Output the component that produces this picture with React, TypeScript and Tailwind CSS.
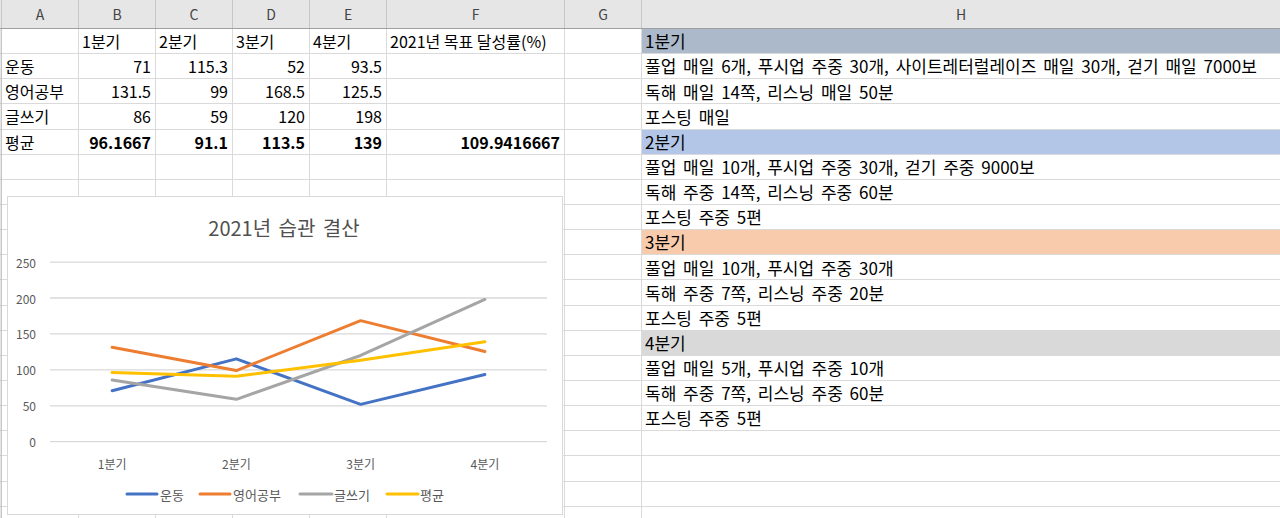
import React from "react";

const FONT = { fontFamily: '"Noto Sans CJK KR", "Noto Sans", sans-serif' };

type Cell = { t?: string; r?: boolean; b?: boolean };
type Row = { cells: Cell[]; h?: string; hbg?: string };

const rows: Row[] = [
  { cells: [{}, { t: "1분기" }, { t: "2분기" }, { t: "3분기" }, { t: "4분기" }, { t: "2021년 목표 달성률(%)" }, {}], h: "1분기", hbg: "bg-[#acb9ca]" },
  { cells: [{ t: "운동" }, { t: "71", r: true }, { t: "115.3", r: true }, { t: "52", r: true }, { t: "93.5", r: true }, {}, {}], h: "풀업 매일 6개, 푸시업 주중 30개, 사이트레터럴레이즈 매일 30개, 걷기 매일 7000보" },
  { cells: [{ t: "영어공부" }, { t: "131.5", r: true }, { t: "99", r: true }, { t: "168.5", r: true }, { t: "125.5", r: true }, {}, {}], h: "독해 매일 14쪽, 리스닝 매일 50분" },
  { cells: [{ t: "글쓰기" }, { t: "86", r: true }, { t: "59", r: true }, { t: "120", r: true }, { t: "198", r: true }, {}, {}], h: "포스팅 매일" },
  { cells: [{ t: "평균" }, { t: "96.1667", r: true, b: true }, { t: "91.1", r: true, b: true }, { t: "113.5", r: true, b: true }, { t: "139", r: true, b: true }, { t: "109.9416667", r: true, b: true }, {}], h: "2분기", hbg: "bg-[#b4c6e7]" },
  { cells: [], h: "풀업 매일 10개, 푸시업 주중 30개, 걷기 주중 9000보" },
  { cells: [], h: "독해 주중 14쪽, 리스닝 주중 60분" },
  { cells: [], h: "포스팅 주중 5편" },
  { cells: [], h: "3분기", hbg: "bg-[#f8cbad]" },
  { cells: [], h: "풀업 매일 10개, 푸시업 주중 30개" },
  { cells: [], h: "독해 주중 7쪽, 리스닝 주중 20분" },
  { cells: [], h: "포스팅 주중 5편" },
  { cells: [], h: "4분기", hbg: "bg-[#d9d9d9]" },
  { cells: [], h: "풀업 매일 5개, 푸시업 주중 10개" },
  { cells: [], h: "독해 주중 7쪽, 리스닝 주중 60분" },
  { cells: [], h: "포스팅 주중 5편" },
  { cells: [] },
  { cells: [] },
  { cells: [] },
  { cells: [] },
];

const widths = ["w-[77px]", "w-[77px]", "w-[77px]", "w-[77px]", "w-[77px]", "w-[178px]", "w-[77px]"];
const letters = ["A", "B", "C", "D", "E", "F", "G"];

const series = [
  { name: "운동", color: "#4472c4", v: [71, 115.3, 52, 93.5] },
  { name: "영어공부", color: "#ed7d31", v: [131.5, 99, 168.5, 125.5] },
  { name: "글쓰기", color: "#a5a5a5", v: [86, 59, 120, 198] },
  { name: "평균", color: "#ffc000", v: [96.1667, 91.1, 113.5, 139] },
];

const X0 = 42;
const X1 = 539;
const band = (X1 - X0) / 4;
const cx = (i: number) => X0 + band * (i + 0.5);
const cy = (v: number) => 244.7 - v * 0.7184;

function Chart() {
  const legend = [
    { x1: 119, x2: 149, tx: 152 },
    { x1: 192, x2: 222, tx: 225 },
    { x1: 292, x2: 324, tx: 326 },
    { x1: 379, x2: 410, tx: 412 },
  ];
  return (
    <div className="absolute left-[7px] top-[196px] w-[556px] h-[319px] border border-[#d9d9d9] bg-white" style={FONT}>
      <svg width="554" height="317" className="block">
        <text x="276" y="30" textAnchor="middle" dominantBaseline="central" fontSize="20" fill="#505050" style={{ wordSpacing: "3px" }}>
          2021년 습관 결산
        </text>
        {[0, 50, 100, 150, 200, 250].map((v) => (
          <g key={v}>
            <line x1={X0} x2={X1} y1={cy(v)} y2={cy(v)} stroke="#d9d9d9" strokeWidth="1.3" />
            <text x="28" y={cy(v)} textAnchor="end" dominantBaseline="central" fontSize="12" fill="#595959">
              {v}
            </text>
          </g>
        ))}
        {["1분기", "2분기", "3분기", "4분기"].map((c, i) => (
          <text key={c} x={cx(i)} y="266" textAnchor="middle" dominantBaseline="central" fontSize="12" fill="#595959">
            {c}
          </text>
        ))}
        {series.map((s) => (
          <polyline
            key={s.name}
            points={s.v.map((v, i) => `${cx(i)},${cy(v)}`).join(" ")}
            fill="none"
            stroke={s.color}
            strokeWidth="3"
            strokeLinejoin="round"
            strokeLinecap="round"
          />
        ))}
        {series.map((s, i) => (
          <g key={s.name}>
            <line x1={legend[i].x1} x2={legend[i].x2} y1="297" y2="297" stroke={s.color} strokeWidth="3" strokeLinecap="round" />
            <text x={legend[i].tx} y="297" dominantBaseline="central" fontSize="13" fill="#595959">
              {s.name}
            </text>
          </g>
        ))}
      </svg>
    </div>
  );
}

export default function App() {
  return (
    <div className="relative w-[1280px] h-[518px] overflow-hidden bg-white text-black" style={FONT}>
      <div className="flex h-[29px] bg-[#e6e6e6] border-b border-[#9f9f9f] text-[14px] text-[#444]">
        <div className="w-[2px] shrink-0 border-r border-[#c6c6c6]" />
        {letters.map((l, i) => (
          <div key={l} className={`${widths[i]} shrink-0 border-r border-[#c6c6c6] flex items-center justify-center`}>
            {l}
          </div>
        ))}
        <div className="flex-1 flex items-center justify-center">H</div>
      </div>
      {rows.map((row, ri) => (
        <div key={ri} className="flex h-[25.15px] text-[16px]">
          <div className="w-[2px] shrink-0 bg-[#e6e6e6] border-r border-b border-[#c6c6c6]" />
          {widths.map((w, ci) => {
            const c = row.cells[ci] || {};
            return (
              <div
                key={ci}
                className={`${w} shrink-0 border-r border-b border-[#dadada] flex items-center overflow-visible whitespace-nowrap ${c.r ? "justify-end pr-[4px]" : "pl-[3px]"} ${c.b ? "font-bold" : ""}`}
              >
                {c.t}
              </div>
            );
          })}
          <div className={`flex-1 border-b border-[#dadada] flex items-center pl-[3px] whitespace-nowrap text-[17px] [word-spacing:3px] ${row.hbg ?? ""}`}>
            {row.h}
          </div>
        </div>
      ))}
      <Chart />
    </div>
  );
}
